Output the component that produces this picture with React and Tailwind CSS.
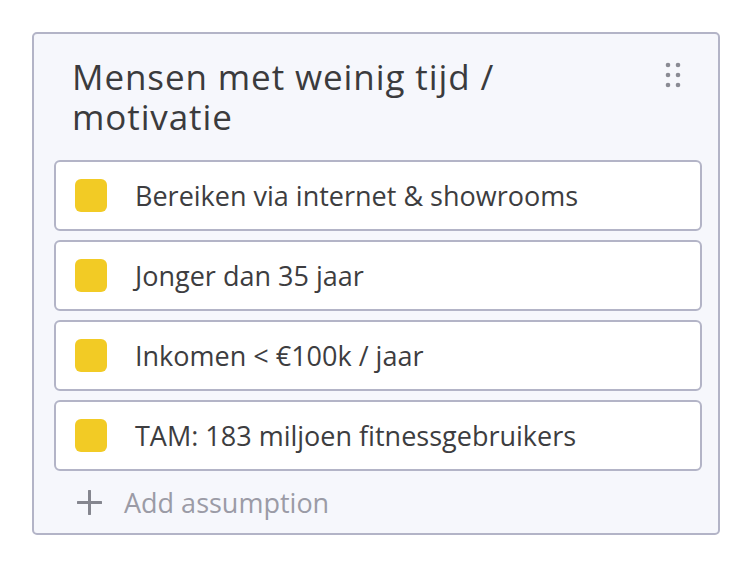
import React from "react";

const items = [
  "Bereiken via internet & showrooms",
  "Jonger dan 35 jaar",
  "Inkomen < €100k / jaar",
  "TAM: 183 miljoen fitnessgebruikers",
];

function DragDots() {
  return (
    <svg width="16" height="26" viewBox="0 0 16 26" className="shrink-0 mt-[5px] mr-[37px]">
      {[0, 1, 2].map((r) =>
        [0, 1].map((c) => (
          <circle key={`${r}-${c}`} cx={3 + c * 10} cy={3 + r * 10} r="2.3" fill="#8a8b94" />
        ))
      )}
    </svg>
  );
}

export default function App() {
  return (
    <div className="w-[752px] h-[568px] bg-white pt-[32px] pl-[32px]" style={{ fontFamily: "'Open Sans', Lato, sans-serif" }}>
      <div className="w-[688px] h-[503px] border-2 border-[#b3b4c7] rounded-[5px] bg-[#f6f7fc] flex flex-col">
        <div className="flex items-start pt-[23px] pl-[38px]">
          <div className="flex-1 text-[35px] leading-[40px] tracking-[0.9px] text-[#3b3b3d]">
            Mensen met weinig tijd /<br />motivatie
          </div>
          <DragDots />
        </div>
        <div className="flex flex-col gap-[9px] mt-[23px] ml-[20px] mr-[16px]">
          {items.map((t) => (
            <div key={t} className="h-[71px] border-2 border-[#b3b4c7] rounded-[6px] bg-white flex items-center pl-[19px]">
              <div className="w-[32px] h-[33px] rounded-[6px] bg-[#f2cb25] shrink-0" />
              <div className="ml-[28px] text-[27px] text-[#3d3d40] leading-none">{t}</div>
            </div>
          ))}
        </div>
        <div className="flex items-center ml-[43px] mt-[18px]">
          <svg width="25" height="25" viewBox="0 0 25 25" className="shrink-0">
            <path d="M12.5 1v23M1 12.5h23" stroke="#85868f" strokeWidth="3" strokeLinecap="round" />
          </svg>
          <div className="ml-[22px] text-[27px] leading-none text-[#9b9ba6]">Add assumption</div>
        </div>
      </div>
    </div>
  );
}
